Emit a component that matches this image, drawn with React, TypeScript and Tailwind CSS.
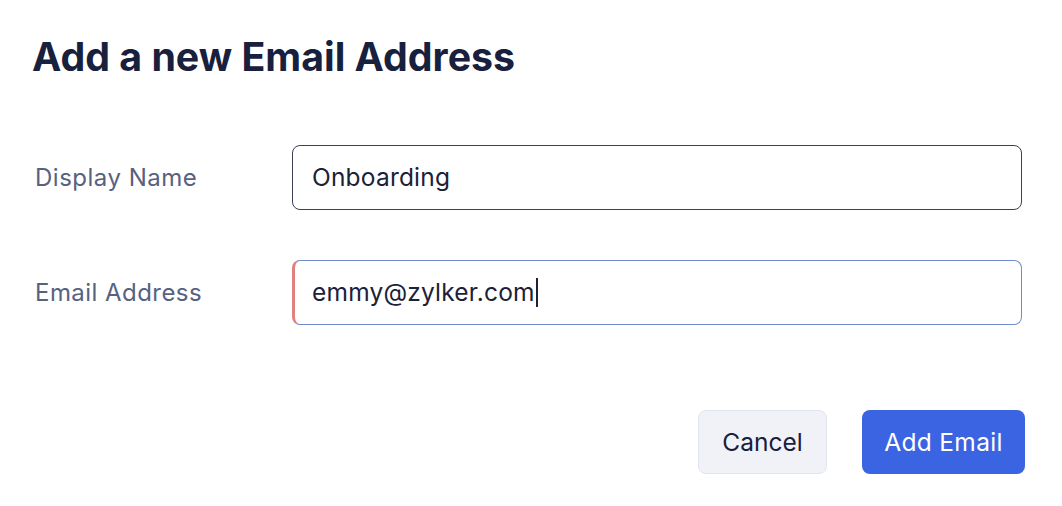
import React from "react";

const App = () => {
  return (
    <div className="w-[1062px] h-[506px] bg-white font-['Inter',sans-serif] px-[33px] pt-[33px]">
      <h1 className="-ml-[1px] text-[39.3px] leading-[48px] font-bold text-[#17203d]">
        Add a new Email Address
      </h1>
      <div className="mt-[64px] flex flex-col gap-[50px]">
        <div className="flex items-center">
          <label className="w-[259px] pl-[2px] text-[24px] tracking-[0.5px] text-[#56627f]">Display Name</label>
          <div className="flex-1 mr-[7px] h-[65px] rounded-[8px] border border-[#3b4052] flex items-center px-[19px] text-[24.5px] tracking-[0.2px] text-[#1b2238]">
            Onboarding
          </div>
        </div>
        <div className="flex items-center">
          <label className="w-[259px] pl-[2px] text-[24px] tracking-[0.45px] text-[#56627f]">Email Address</label>
          <div className="flex-1 mr-[7px] h-[65px] rounded-[8px] border border-[#6f8ccc] border-l-[3px] border-l-[#e08080] flex items-center pl-[17px] pr-[19px] text-[24.5px] tracking-[0.2px] text-[#1b2238]">
            emmy@zylker.com
            <span className="w-[2px] h-[29px] bg-[#1b2238] ml-[1px]" />
          </div>
        </div>
      </div>
      <div className="mt-[85px] flex justify-end gap-[35px] pr-[4px]">
        <button className="h-[64px] w-[129px] rounded-[8px] bg-[#f1f2f8] border border-[#e1e4ee] text-[24.5px] text-[#17203d]">
          Cancel
        </button>
        <button className="h-[64px] w-[163px] rounded-[8px] bg-[#3b64e3] text-[24.5px] tracking-[0.3px] text-white">
          Add Email
        </button>
      </div>
    </div>
  );
};

export default App;
